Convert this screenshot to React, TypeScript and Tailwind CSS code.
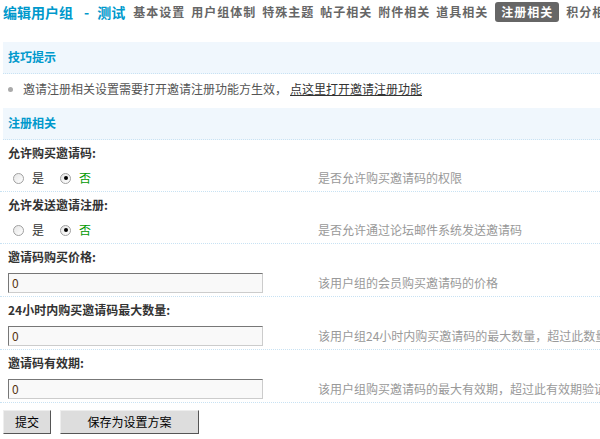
import React from "react";

const tabs = [
  "基本设置",
  "用户组体制",
  "特殊主题",
  "帖子相关",
  "附件相关",
  "道具相关",
  "注册相关",
  "积分相关",
];

function Radio({ checked }: { checked?: boolean }) {
  return (
    <span className="w-[11px] h-[11px] rounded-full border border-[#a0a0a0] bg-gradient-to-br from-[#e6e6e6] to-white flex items-center justify-center shrink-0">
      {checked && <span className="w-[4px] h-[4px] rounded-full bg-black" />}
    </span>
  );
}

function SectionHead({ title }: { title: string }) {
  return (
    <div className="ml-[3px] h-[32px] bg-[#f0f7fd] border-b border-dotted border-[#c8e2f3] flex items-center pl-[5px] pb-[1px]">
      <span className="text-[12px] font-bold text-[#0099cc]">{title}</span>
    </div>
  );
}

function Setting({
  label,
  desc,
  children,
  tall,
}: {
  label: string;
  desc: string;
  children: React.ReactNode;
  tall?: boolean;
}) {
  return (
    <div className="border-b border-dotted border-[#c8e2f3]">
      <div className="h-[25px] flex items-center pl-[8px] text-[12px] font-bold text-[#333]">
        {label}
      </div>
      <div className={`${tall ? "h-[27px]" : "h-[26px]"} flex items-center`}>
        <div className="w-[318px] shrink-0 flex items-center">{children}</div>
        <span className="text-[12px] text-[#999] whitespace-nowrap">{desc}</span>
      </div>
    </div>
  );
}

function YesNo() {
  return (
    <div className="flex items-center pl-[13px] text-[12px]">
      <Radio />
      <span className="ml-[8px] text-[#333]">是</span>
      <span className="ml-[16px]">
        <Radio checked />
      </span>
      <span className="ml-[8px] text-[#009900]">否</span>
    </div>
  );
}

function TextBox() {
  return (
    <input
      defaultValue="0"
      className="ml-[8px] w-[255px] h-[20px] bg-[#f9f9f9] border border-t-[#777] border-l-[#777] border-b-[#ccc] border-r-[#ccc] pl-[3px] text-[12px] text-[#553311] outline-none"
    />
  );
}

export default function App() {
  return (
    <div className="w-[600px] h-[439px] overflow-hidden bg-white font-['Noto_Sans_CJK_SC','Liberation_Sans',sans-serif]">
      <div className="h-[24px] flex items-center whitespace-nowrap mb-[18px]">
        <span className="ml-[3px] flex items-center text-[14px] font-bold text-[#0099cc]">
          编辑用户组
          <span className="ml-[11px] mr-[8px]">-</span>
          测试
        </span>
        <div className="ml-[5px] flex items-center">
          {tabs.map((t) =>
            t === "注册相关" ? (
              <span
                key={t}
                className="mx-[4px] px-[6px] h-[20px] flex items-center rounded-[3px] bg-[#666] text-white text-[12px] font-bold tracking-[1px]"
              >
                {t}
              </span>
            ) : (
              <span
                key={t}
                className="mx-[3px] text-[12px] font-bold tracking-[1px] text-[#666]"
              >
                {t}
              </span>
            )
          )}
        </div>
      </div>

      <SectionHead title="技巧提示" />
      <div className="h-[34px] flex items-center pb-[4px] whitespace-nowrap text-[12px] text-[#555]">
        <span className="ml-[8px] w-[5px] h-[5px] rounded-full bg-[#aaa]" />
        <span className="ml-[10px]">邀请注册相关设置需要打开邀请注册功能方生效，</span>
        <span className="ml-[3px] underline text-[#333]">点这里打开邀请注册功能</span>
      </div>

      <SectionHead title="注册相关" />
      <Setting label="允许购买邀请码:" desc="是否允许购买邀请码的权限">
        <YesNo />
      </Setting>
      <Setting label="允许发送邀请注册:" desc="是否允许通过论坛邮件系统发送邀请码">
        <YesNo />
      </Setting>
      <Setting label="邀请码购买价格:" desc="该用户组的会员购买邀请码的价格" tall>
        <TextBox />
      </Setting>
      <Setting
        label="24小时内购买邀请码最大数量:"
        desc="该用户组24小时内购买邀请码的最大数量，超过此数量将不能再购买，0 为不限制"
        tall
      >
        <TextBox />
      </Setting>
      <Setting
        label="邀请码有效期:"
        desc="该用户组购买邀请码的最大有效期，超过此有效期验证码将自动失效，单位：天"
        tall
      >
        <TextBox />
      </Setting>

      <div className="mt-[7px] flex items-center">
        <button className="ml-[3px] w-[48px] h-[24px] bg-[#ddd] border border-t-[#eee] border-l-[#eee] border-b-[#555] border-r-[#555] text-[12px] text-black">
          提交
        </button>
        <button className="ml-[9px] w-[139px] h-[24px] bg-[#ddd] border border-t-[#eee] border-l-[#eee] border-b-[#555] border-r-[#555] text-[12px] text-black">
          保存为设置方案
        </button>
      </div>
    </div>
  );
}
